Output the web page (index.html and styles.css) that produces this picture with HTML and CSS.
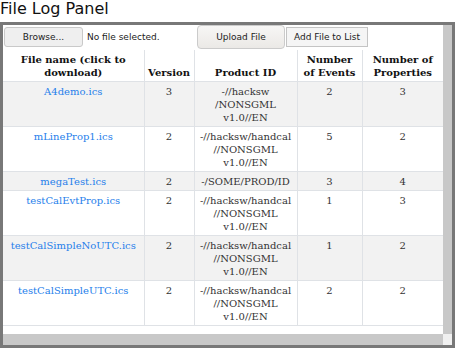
FILE: index.html
```html
<!DOCTYPE html>
<html lang="en">
<head>
  <meta charset="UTF-8">
  <meta name="viewport" content="width=device-width, initial-scale=1.0">
  <title>File Log Panel</title>
  <link rel="stylesheet" href="styles.css">
</head>
<body>
  <h1 class="title">File Log Panel</h1>
  <div class="panel">
    <div class="panel-body">
      <div class="upload-bar">
        <button class="btn browse">Browse...</button>
        <span class="file-status">No file selected.</span>
        <button class="btn upload">Upload File</button>
        <button class="btn add">Add File to List</button>
      </div>
      <table class="log-table">
        <colgroup>
          <col style="width: 141px">
          <col style="width: 50px">
          <col style="width: 103px">
          <col style="width: 65px">
          <col style="width: 81px">
        </colgroup>
        <thead>
          <tr>
            <th>File name (click to download)</th>
            <th>Version</th>
            <th>Product ID</th>
            <th>Number of Events</th>
            <th>Number of Properties</th>
          </tr>
        </thead>
        <tbody>
          <tr>
            <td><a href="#">A4demo.ics</a></td>
            <td>3</td>
            <td>-//hacksw<br>/NONSGML<br>v1.0//EN</td>
            <td>2</td>
            <td>3</td>
          </tr>
          <tr>
            <td><a href="#">mLineProp1.ics</a></td>
            <td>2</td>
            <td>-//hacksw/handcal<br>//NONSGML<br>v1.0//EN</td>
            <td>5</td>
            <td>2</td>
          </tr>
          <tr>
            <td><a href="#">megaTest.ics</a></td>
            <td>2</td>
            <td>-/SOME/PROD/ID</td>
            <td>3</td>
            <td>4</td>
          </tr>
          <tr>
            <td><a href="#">testCalEvtProp.ics</a></td>
            <td>2</td>
            <td>-//hacksw/handcal<br>//NONSGML<br>v1.0//EN</td>
            <td>1</td>
            <td>3</td>
          </tr>
          <tr>
            <td><a href="#">testCalSimpleNoUTC.ics</a></td>
            <td>2</td>
            <td>-//hacksw/handcal<br>//NONSGML<br>v1.0//EN</td>
            <td>1</td>
            <td>2</td>
          </tr>
          <tr>
            <td><a href="#">testCalSimpleUTC.ics</a></td>
            <td>2</td>
            <td>-//hacksw/handcal<br>//NONSGML<br>v1.0//EN</td>
            <td>2</td>
            <td>2</td>
          </tr>
        </tbody>
      </table>
    </div>
    <div class="vscroll"></div>
    <div class="hscroll"></div>
    <div class="corner"></div>
  </div>
</body>
</html>
```

FILE: styles.css
```css
/* File log panel */
body {
  margin: 0;
  background-color: #fff;
  font-family: "DejaVu Serif", serif;
}
.title {
  margin: 0 0 5px 0;
  font-family: "DejaVu Sans", sans-serif;
  font-size: 16px;
  font-weight: normal;
  line-height: 17px;
  color: #111;
}
.panel {
  box-sizing: border-box;
  width: 455px;
  height: 326px;
  border: 3px solid #787878;
  display: grid;
  grid-template-columns: 440px 1fr;
  grid-template-rows: 1fr 11px;
}
.panel-body {
  overflow: hidden;
  background-color: #fff;
}
.vscroll {
  background-color: #c8c8c8;
}
.hscroll {
  background-color: #c8c8c8;
}
.corner {
  background-color: #f0f0f0;
}
.upload-bar {
  display: flex;
  align-items: center;
  height: 24px;
  margin-bottom: 1px;
  font-family: "DejaVu Sans", sans-serif;
  font-size: 9px;
  color: #222;
}
.btn {
  box-sizing: border-box;
  font-family: "DejaVu Sans", sans-serif;
  font-size: 9px;
  color: #222;
  cursor: pointer;
  padding: 0;
}
.browse {
  width: 79px;
  height: 20px;
  margin-left: 1px;
  border: 1px solid #c9c9c9;
  border-radius: 3px;
  background-color: #efefef;
}
.file-status {
  width: 110px;
  margin-left: 4px;
}
.upload {
  width: 88px;
  height: 24px;
  border: 1px solid #cbcbcb;
  border-radius: 4px;
  background: linear-gradient(#f7f6f5, #ebe9e6);
}
.add {
  width: 82px;
  height: 20px;
  margin-left: 1px;
  border: 1px solid #c4c4c4;
  border-radius: 0;
  background-color: #f5f5f5;
}
.log-table {
  width: 440px;
  table-layout: fixed;
  border-collapse: collapse;
  font-size: 10px;
  line-height: 13px;
  color: #333;
}
.log-table th,
.log-table td {
  border: 1px solid #dfe2e6;
  padding: 3px 2px 2px 2px;
  text-align: center;
}
.log-table th {
  border-top: none;
  vertical-align: bottom;
  color: #111;
  font-weight: bold;
}
.log-table td {
  vertical-align: top;
}
.log-table th:first-child,
.log-table td:first-child {
  border-left: none;
}
.log-table th:last-child,
.log-table td:last-child {
  border-right: none;
}
.log-table tbody tr:nth-child(odd) {
  background-color: #f2f2f2;
}
.log-table a {
  color: #2680eb;
  text-decoration: none;
}
```
